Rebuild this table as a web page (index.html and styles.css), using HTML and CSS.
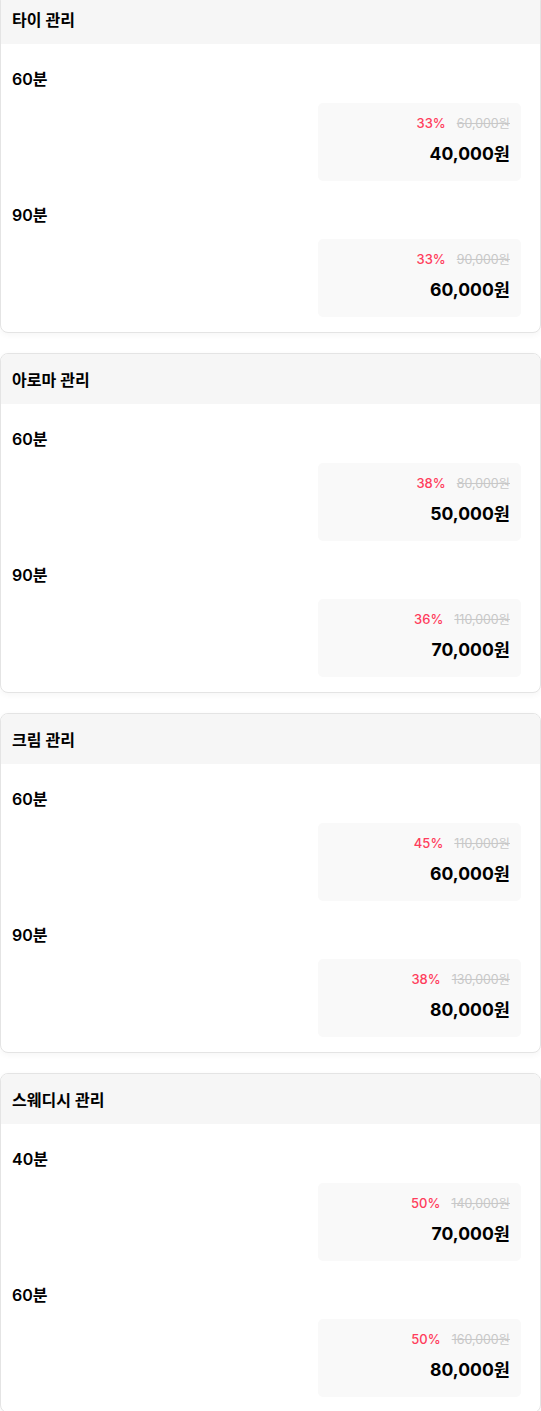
FILE: index.html
```html
<!DOCTYPE html>
<html lang="ko">
<head>
<meta charset="utf-8">
<link rel="stylesheet" href="styles.css">
</head>
<body>
<div class="list">
  <section class="card">
    <h2 class="card-title">타이 관리</h2>
    <div class="card-body">
      <div class="item">
        <h3 class="item-title">60분</h3>
        <div class="price-box">
          <div class="price-top"><span class="rate">33%</span><span class="origin">60,000원</span></div>
          <div class="price">40,000원</div>
        </div>
      </div>
      <div class="item">
        <h3 class="item-title">90분</h3>
        <div class="price-box">
          <div class="price-top"><span class="rate">33%</span><span class="origin">90,000원</span></div>
          <div class="price">60,000원</div>
        </div>
      </div>
    </div>
  </section>
  <section class="card">
    <h2 class="card-title">아로마 관리</h2>
    <div class="card-body">
      <div class="item">
        <h3 class="item-title">60분</h3>
        <div class="price-box">
          <div class="price-top"><span class="rate">38%</span><span class="origin">80,000원</span></div>
          <div class="price">50,000원</div>
        </div>
      </div>
      <div class="item">
        <h3 class="item-title">90분</h3>
        <div class="price-box">
          <div class="price-top"><span class="rate">36%</span><span class="origin">110,000원</span></div>
          <div class="price">70,000원</div>
        </div>
      </div>
    </div>
  </section>
  <section class="card">
    <h2 class="card-title">크림 관리</h2>
    <div class="card-body">
      <div class="item">
        <h3 class="item-title">60분</h3>
        <div class="price-box">
          <div class="price-top"><span class="rate">45%</span><span class="origin">110,000원</span></div>
          <div class="price">60,000원</div>
        </div>
      </div>
      <div class="item">
        <h3 class="item-title">90분</h3>
        <div class="price-box">
          <div class="price-top"><span class="rate">38%</span><span class="origin">130,000원</span></div>
          <div class="price">80,000원</div>
        </div>
      </div>
    </div>
  </section>
  <section class="card">
    <h2 class="card-title">스웨디시 관리</h2>
    <div class="card-body">
      <div class="item">
        <h3 class="item-title">40분</h3>
        <div class="price-box">
          <div class="price-top"><span class="rate">50%</span><span class="origin">140,000원</span></div>
          <div class="price">70,000원</div>
        </div>
      </div>
      <div class="item">
        <h3 class="item-title">60분</h3>
        <div class="price-box">
          <div class="price-top"><span class="rate">50%</span><span class="origin">160,000원</span></div>
          <div class="price">80,000원</div>
        </div>
      </div>
    </div>
  </section>
</div>
</body>
</html>
```

FILE: styles.css
```css
html, body {
  margin: 0;
  padding: 0;
  background: #ffffff;
}
body {
  font-family: Inter, "Noto Sans CJK KR", sans-serif;
  color: #000000;
}
.list {
  display: flex;
  flex-direction: column;
  gap: 20px;
  margin-top: -7px;
}
.card {
  border: 1px solid #e4e4e4;
  border-radius: 8px;
  overflow: hidden;
  background: #fff;
  box-shadow: 0 2px 6px rgba(0, 0, 0, 0.04);
}
.card-title {
  margin: 0;
  height: 50px;
  display: flex;
  align-items: center;
  padding: 0 11px;
  background: #f6f6f6;
  font-size: 16px;
  font-weight: 600;
  color: #000;
}
.card-body {
  display: flex;
  flex-direction: column;
  gap: 22px;
  padding: 23px 19px 15px 11px;
}
.item {
  display: flex;
  flex-direction: column;
  gap: 12px;
}
.item-title {
  margin: 0;
  font-size: 16px;
  line-height: 24px;
  font-weight: 600;
  color: #000;
}
.price-box {
  align-self: flex-end;
  width: 203px;
  height: 78px;
  box-sizing: border-box;
  background: #f9f9f9;
  border-radius: 5px;
  padding: 10px 11px 0 0;
  display: flex;
  flex-direction: column;
  align-items: flex-end;
  gap: 7px;
}
.price-top {
  display: flex;
  align-items: baseline;
  gap: 11px;
  font-size: 13px;
  line-height: 20px;
}
.rate {
  color: #ff3d5c;
  font-weight: 500;
}
.origin {
  font-size: 12.4px;
  color: #c8c8c8;
  text-decoration: line-through;
}
.price {
  font-size: 17.6px;
  line-height: 26px;
  font-weight: 700;
  color: #000;
}
```
